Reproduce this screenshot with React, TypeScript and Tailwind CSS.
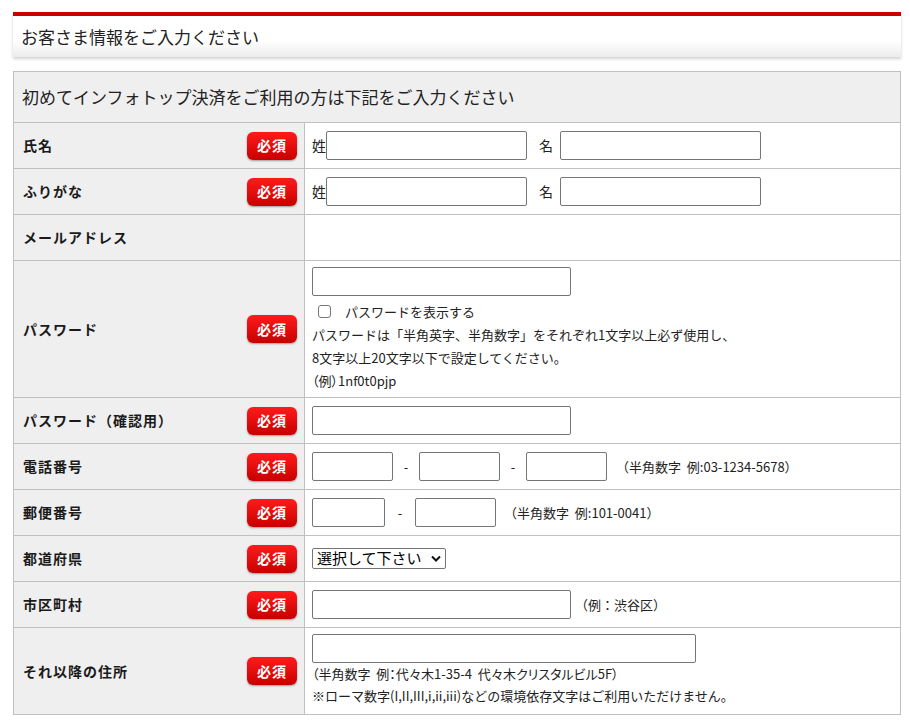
import React from 'react'

const font = { fontFamily: '"Noto Sans CJK JP", "Noto Sans", sans-serif' }

function Badge() {
  return (
    <span className="inline-flex h-[28px] w-[50px] items-center justify-center rounded-[6px] bg-gradient-to-b from-[#ff1a1a] to-[#c80000] text-[14px] font-bold tracking-[1px] text-white shadow-[0_1px_2px_rgba(0,0,0,0.35)]">
      必須
    </span>
  )
}

function Field({ w }: { w: string }) {
  return <span className={`block h-[29px] shrink-0 rounded-[2px] border border-[#767676] bg-white ${w}`} />
}

function Row({
  label,
  required = true,
  h = 'min-h-[46px]',
  children,
}: {
  label: string
  required?: boolean
  h?: string
  children?: React.ReactNode
}) {
  return (
    <div className={`grid grid-cols-[291px_1fr] border-t border-[#c0c0c0] ${h}`}>
      <div className="flex items-center justify-between border-r border-[#c0c0c0] bg-[#efefef] pl-[9px] pr-[7px]">
        <span className="text-[14px] font-bold tracking-[1px] text-[#1a1a1a]">{label}</span>
        {required && <Badge />}
      </div>
      <div className="flex flex-col justify-center pl-[7px] text-[13px] text-[#222]">{children}</div>
    </div>
  )
}

export default function App() {
  return (
    <div className="min-h-[721px] bg-white pt-[12px]" style={font}>
      <div className="ml-[13px] w-[888px]">
        <div className="border-t-4 border-[#c80000] bg-gradient-to-b from-white from-60% to-[#ececec] shadow-[0_2px_3px_rgba(0,0,0,0.18)]">
          <div className="flex h-[41px] items-center pl-[8px] text-[17px] text-[#222]">お客さま情報をご入力ください</div>
        </div>

        <div className="mt-[14px] border border-[#c0c0c0]">
          <div className="flex h-[50px] items-center bg-[#efefef] pl-[8px] text-[17px] text-[#222]">
            初めてインフォトップ決済をご利用の方は下記をご入力ください
          </div>

          <Row label="氏名">
            <div className="flex items-center">
              <span className="w-[14px] text-[14px]">姓</span>
              <Field w="w-[201px]" />
              <span className="ml-[12px] w-[21px] text-[14px]">名</span>
              <Field w="w-[201px]" />
            </div>
          </Row>
          <Row label="ふりがな">
            <div className="flex items-center">
              <span className="w-[14px] text-[14px]">姓</span>
              <Field w="w-[201px]" />
              <span className="ml-[12px] w-[21px] text-[14px]">名</span>
              <Field w="w-[201px]" />
            </div>
          </Row>
          <Row label="メールアドレス" required={false} />

          <Row label="パスワード" h="min-h-[137px]">
            <div className="pb-[5px] pt-[6px] leading-[23px]">
              <Field w="w-[259px]" />
              <div className="mt-[4px] flex items-center">
                <span className="ml-[6px] mr-[14px] block h-[13px] w-[13px] rounded-[3px] border border-[#767676] bg-white" />
                パスワードを表示する
              </div>
              <div>パスワードは「半角英字、半角数字」をそれぞれ1文字以上必ず使用し、</div>
              <div>8文字以上20文字以下で設定してください。</div>
              <div className="[font-feature-settings:'palt']">（例）1nf0t0pjp</div>
            </div>
          </Row>
          <Row label="パスワード（確認用）">
            <Field w="w-[259px]" />
          </Row>
          <Row label="電話番号">
            <div className="flex items-center">
              <Field w="w-[81px]" />
              <span className="w-[26px] text-center">-</span>
              <Field w="w-[81px]" />
              <span className="w-[26px] text-center">-</span>
              <Field w="w-[81px]" />
              <span className="ml-[9px]">（半角数字&nbsp;&nbsp;例:03-1234-5678）</span>
            </div>
          </Row>
          <Row label="郵便番号">
            <div className="flex items-center">
              <Field w="w-[73px]" />
              <span className="w-[30px] text-center">-</span>
              <Field w="w-[81px]" />
              <span className="ml-[8px]">（半角数字&nbsp;&nbsp;例:101-0041）</span>
            </div>
          </Row>
          <Row label="都道府県">
            <div className="flex h-[21px] w-[134px] items-center justify-between rounded-[2px] border border-[#767676] bg-white pl-[4px] pr-[4px] text-[15px] text-black">
              選択して下さい
              <svg width="10" height="7" viewBox="0 0 10 7">
                <path d="M1 1.5 L5 5.5 L9 1.5" fill="none" stroke="#111" strokeWidth="2" />
              </svg>
            </div>
          </Row>
          <Row label="市区町村">
            <div className="flex items-center">
              <Field w="w-[259px]" />
              <span className="ml-[4px]">（例：渋谷区）</span>
            </div>
          </Row>
          <Row label="それ以降の住所" h="min-h-[86px]">
            <div className="pb-[7px] pt-[6px] leading-[22px]">
              <Field w="w-[384px]" />
              <div className="[font-feature-settings:'palt']">（半角数字&nbsp;&nbsp;例：代々木1-35-4&nbsp;&nbsp;代々木クリスタルビル5F）</div>
              <div>※ローマ数字(I,II,III,i,ii,iii)などの環境依存文字はご利用いただけません。</div>
            </div>
          </Row>
        </div>
      </div>
    </div>
  )
}
